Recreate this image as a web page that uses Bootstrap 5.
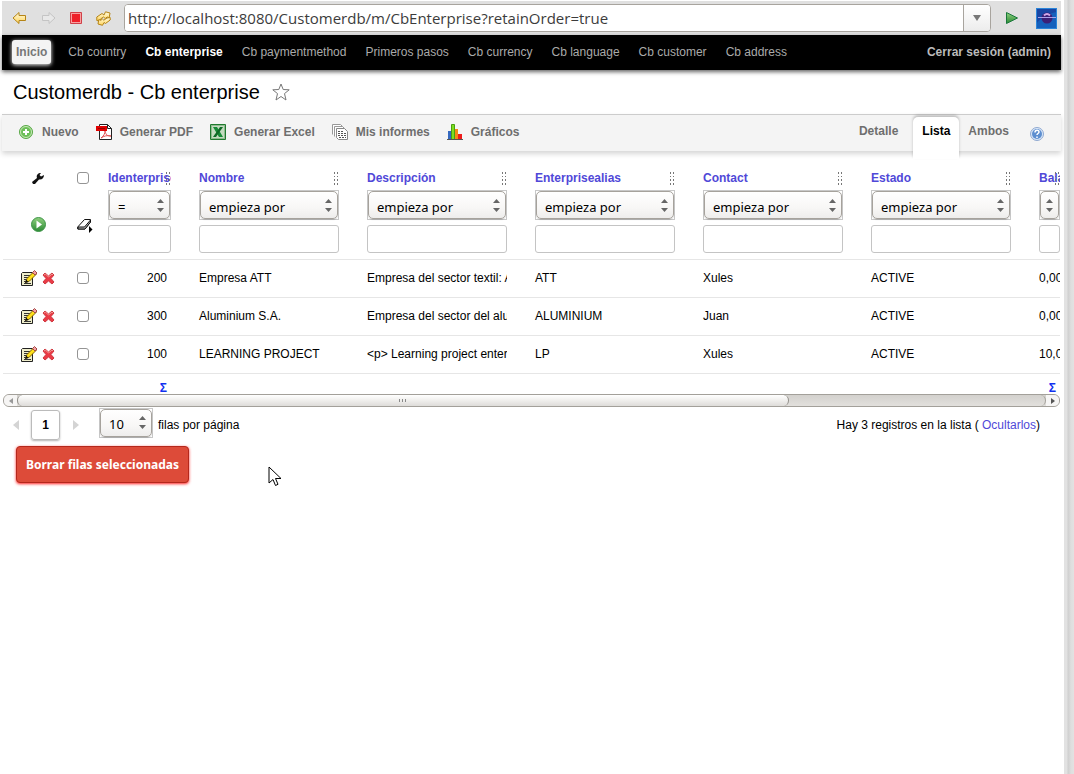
<!DOCTYPE html>
<html lang="es">
<head>
<meta charset="utf-8">
<meta name="viewport" content="width=device-width, initial-scale=1">
<title>Customerdb - Cb enterprise</title>
<link href="https://cdn.jsdelivr.net/npm/bootstrap@5.3.0/dist/css/bootstrap.min.css" rel="stylesheet">
<style>
  :root { --ui: "Noto Sans", "Open Sans", sans-serif; --link: #5048d8; }
  body { font: 12px/16px "Liberation Sans", Arial, sans-serif; color: #000; background: #fff; }
  a { color: var(--link); text-decoration: none; }
  svg { display: block; flex: none; }
  button { border: 0; background: none; padding: 0; color: inherit; }
  .frame { min-height: 100vh; padding-left: 2px; }
  .gutter { flex: 0 0 10px; background: linear-gradient(90deg, #e2e2e2 0 3px, #cfcfcf 4px, #dedede 7px, #e2e2e2); }
  .view { flex: 1 1 0; margin-right: 3px; min-width: 0; }

  .browser-bar { height: 34px; margin-top: 1px; background: #e0e0e0; padding: 0 4px 0 10px; }
  .history { gap: 14px; }
  .address { height: 28px; border: 1px solid #a8a49e; border-radius: 4px; background: #fff; margin: 0 15px 0 13px; overflow: hidden; }
  .address input { border: 0; outline: 0; padding: 0 0 0 3px; font: 15px/26px "Open Sans", sans-serif; color: #3c3c3c; min-width: 0; background: #fff; }
  .address button { width: 27px; border-left: 1px solid #a8a49e; background: linear-gradient(#fff, #ececec); }
  .emblem { margin-left: 18px; }

  .menu { height: 35px; background: #000; padding: 0 10px 2px; box-shadow: 0 2px 4px rgba(0,0,0,.6); gap: 19px; }
  .menu a { color: #aaa; }
  .menu a.current { color: #fff; font-weight: bold; }
  .menu a.home { background: #f4f4f4; color: #777; font-weight: bold; border-radius: 3px; padding: 4px; margin-right: -2px; box-shadow: 0 1px 4px #fff; }
  .menu a.logout { color: #bbb; font-weight: bold; }

  .page-title { font-size: 20px; line-height: 24px; height: 44px; padding: 0 11px; gap: 12px; }

  .actions { height: 37px; background: #f4f4f4; border-top: 1px solid #ccc; box-shadow: 0 3px 5px rgba(0,0,0,.16); padding: 0 17px 2px 16px; font-weight: bold; }
  .actions a { color: #6e6e6e; }
  .actions .tool { gap: 8px; margin-right: 17px; }
  .tabs a { padding: 8px 9px; height: 36px; }
  .tabs a.chosen { color: #000; background: #fff; border-radius: 5px 5px 0 0; height: 42px; margin: 2px 0 0 6px; box-shadow: 0 -2px 3px rgba(0,0,0,.22); padding-top: 6px; }

  .list { margin: 0 1px; overflow: hidden; }
  .list table { table-layout: fixed; width: 100%; border-collapse: collapse; }
  .list td, .list th { padding: 0 14px; border-bottom: 1px solid #e6e6e6; overflow: hidden; white-space: nowrap; }
  .list td:first-child, .list th:first-child { padding: 0 13px 0 17px; }
  .list td:nth-child(2), .list th:nth-child(2) { padding: 0 0 0 8px; }
  .list td:last-child, .list th:last-child { padding-right: 0; }
  .list thead th { height: 108px; padding-top: 19px !important; vertical-align: top; color: var(--link); }
  .list tbody td { height: 38px; vertical-align: middle; }
  .list tfoot td { height: 21px; border: 0; vertical-align: bottom; text-align: right; padding-bottom: 0; }
  .clip { overflow: hidden; }
  .heading { position: relative; margin-bottom: 4px; overflow: hidden; }
  .heading svg { position: absolute; right: 0; top: 2px; }
  .list input[type=text] { display: block; width: 100%; height: 28px; border: 1px solid #c4c4c4; border-radius: 3px; background: #fff; }
  .list input[type=checkbox] { appearance: none; display: block; width: 12px; height: 12px; border: 1px solid #949494; border-radius: 3px; background: #fff; margin: 0; }
  .list .head-tools { display: grid; row-gap: 33px; padding-top: 2px; }
  .picker { border: 1px solid #c8c8c8; height: 30px; margin-bottom: 5px; }
  .picker select { appearance: none; display: block; width: 100%; height: 28px; border: 1px solid #a6a29c; border-radius: 5px; padding: 3px 16px 0 8px; font: 13px/22px var(--ui); color: #000;
    background: url("data:image/svg+xml,%3Csvg xmlns='http://www.w3.org/2000/svg' width='7' height='13'%3E%3Cpath d='M0 4L3.500 0L7 4zM0 9L3.500 13L7 9z' fill='%23666'/%3E%3C/svg%3E") no-repeat right 5px center, linear-gradient(#fff, #f8f7f6 60%, #eeedec); box-shadow: 0 1px 1px rgba(0,0,0,.15); }
  .picker select.bare { padding: 0; }
  .sum { color: #1030f0; font: bold 12px/12px "Liberation Sans", sans-serif; }

  .slider-track { height: 13px; margin: 0 1px; border: 1px solid #a3a09a; border-radius: 6px; background: linear-gradient(#d3d1cd, #e2e0dd); overflow: hidden; }
  .slider-track button { width: 13px; background: #f6f5f4; display: flex; align-items: center; justify-content: center; }
  .thumb { width: 75%; border: 1px solid #918e88; border-width: 0 1px; border-radius: 6px; background: linear-gradient(#fff, #f1f0ee 45%, #dedcd9); }
  .track-end { width: 25%; border-right: 1px solid #a3a09a; border-radius: 0 6px 6px 0; }

  .pager { height: 34px; padding: 2px 21px 0 11px; }
  .page-now { width: 29px; height: 30px; border: 1px solid #bbb; border-radius: 3px; font-weight: bold; box-shadow: 0 1px 2px rgba(0,0,0,.3); margin: 0 13px 0 12px; }
  .pager .picker { width: 54px; margin: -5px 5px 0 20px; }
  .delete-rows { display: inline-block; margin: 5px 0 0 14px; height: 37px; padding: 0 9px; border: 1px solid #b5281c; border-radius: 4px; background: #dd4b39; color: #fff; font: bold 12px/32px var(--ui); box-shadow: 0 1px 3px #f22; }
  .pointer { position: absolute; left: 268px; top: 466px; }
</style>
</head>
<body>
<svg class="position-absolute" width="0" height="0" aria-hidden="true">
  <defs>
    <linearGradient id="gold" x2="0" y2="1"><stop stop-color="#fffbe0"/><stop offset="1" stop-color="#ffd45a"/></linearGradient>
    <linearGradient id="leaf" x2="0" y2="1"><stop stop-color="#8fd07e"/><stop offset="1" stop-color="#2b8a34"/></linearGradient>
    <symbol id="grip" viewBox="0 0 6 13"><path d="M1 0h1v2H1zM4 0h1v2H4zM1 4h1v1H1zM4 4h1v1H4zM1 7h1v2H1zM4 7h1v2H4zM1 11h1v2H1zM4 11h1v2H4z" fill="#777"/></symbol>
    <symbol id="edit" viewBox="0 0 18 17"><path d="M2.500 2.500h10v13h-11v-12z" fill="#efeecb" stroke="#222"/><path d="M4 5.500h6M4 7.500h5M4 9.500h3M4 11.500h4M4 13.500h7" stroke="#333"/><path d="M5.500 12.500l1.500-4L14 1.500l2.500 2.500-7 7z" fill="#ffe01b" stroke="#806000"/><path d="M12.500 2.500L14.500.5 17 3l-2 2z" fill="#f2a0a0" stroke="#a34848"/><path d="M5 13l1.200-3.500L8.500 12z" fill="#111"/></symbol>
    <symbol id="remove" viewBox="0 0 13 13"><path d="M1 3l2-2 3.500 3L10 1l2 2-3 3.500 3 3.500-2 2-3.500-3L3 12l-2-2 3-3.500z" fill="#ea3b46" stroke="#cf3a42"/><path d="M2 3l1.500-1 3 3L10 2l1 1" fill="none" stroke="#f09a94"/></symbol>
  </defs>
</svg>

<div class="frame d-flex">
  <div class="view">
    <div class="browser-bar d-flex align-items-center">
      <div class="history d-flex align-items-center">
        <button type="button" aria-label="Atrás"><svg width="15" height="14" viewBox="0 0 15 14"><path d="M1 7l6-5.500v3h6.500v5H7v3z" fill="url(#gold)" stroke="#b58416"/></svg></button>
        <button type="button" aria-label="Adelante"><svg width="15" height="14" viewBox="0 0 15 14"><path d="M14 7L8 1.500v3H1.500v5H8v3z" fill="#e8e8e8" stroke="#c4c4c4"/></svg></button>
        <button type="button" aria-label="Detener"><svg width="12" height="12" viewBox="0 0 12 12"><path d="M.5.5h11v11H.5z" fill="#f8a0a0" stroke="#d04048"/><path d="M2 2h8v8H2z" fill="#ee2028"/></svg></button>
        <button type="button" aria-label="Recargar"><svg width="15" height="15" viewBox="0 0 15 15"><path d="M.8 9.500V6L6 2.500 8 4 9.500.8 14 2l-.8 4.700-2-.7-2 1.500L7.500 6 4.500 8l-.7 2z" fill="url(#gold)" stroke="#b58416"/><path d="M14.200 6.500V9L9.500 12.500 8 11.500 6.500 14.300 2 13l.8-4.500 2 .8L6.500 8l1.300 1.200L11 7z" fill="url(#gold)" stroke="#b58416"/></svg></button>
      </div>
      <div class="address d-flex flex-grow-1">
        <input type="text" class="flex-grow-1" aria-label="Dirección" value="http://localhost:8080/Customerdb/m/CbEnterprise?retainOrder=true">
        <button type="button" class="d-flex align-items-center justify-content-center" aria-label="Historial"><svg width="8" height="6" viewBox="0 0 8 6"><path d="M0 0h8L4 6z" fill="#777"/></svg></button>
      </div>
      <button type="button" aria-label="Ir"><svg width="12" height="12" viewBox="0 0 12 12"><path d="M.5.5L11.500 6 .5 11.500z" fill="url(#leaf)" stroke="#18773a"/></svg></button>
      <svg class="emblem" width="21" height="21" viewBox="0 0 21 21" role="img" aria-label="Navegador"><rect width="21" height="21" fill="#1846a4"/><path d="M0 16C6 8 14 5 21 4v17H0z" fill="#1560bc"/><rect x=".5" y=".5" width="20" height="20" fill="none" stroke="#2b85d8"/><circle cx="11" cy="10" r="5.500" fill="#3b1f76"/><path d="M8 7.500q3-3 6 0" stroke="#d0a8e8" fill="none" stroke-width="2"/><path d="M2 9.500h18" stroke="#a8a0e8"/></svg>
    </div>

    <nav class="menu d-flex align-items-center" aria-label="Módulos">
      <a class="home" href="#">Inicio</a>
      <a href="#">Cb country</a>
      <a class="current" href="#">Cb enterprise</a>
      <a href="#">Cb paymentmethod</a>
      <a href="#">Primeros pasos</a>
      <a href="#">Cb currency</a>
      <a href="#">Cb language</a>
      <a href="#">Cb customer</a>
      <a href="#">Cb address</a>
      <a class="logout ms-auto" href="#">Cerrar sesión (admin)</a>
    </nav>

    <h1 class="page-title d-flex align-items-center m-0 fw-normal">Customerdb - Cb enterprise
      <svg width="18" height="18" viewBox="0 0 18 18" role="img" aria-label="Favorito"><path d="M9 1l2.200 5.500 6 .3-4.700 3.800L14 17l-5-3.500L4 17l1.500-6.400L.8 6.800l6-.3z" fill="#fff" stroke="#777"/></svg>
    </h1>

    <div class="actions d-flex align-items-center">
      <a href="#" class="tool d-flex align-items-center"><svg width="16" height="16" viewBox="0 0 16 16"><circle cx="8" cy="8" r="6.500" fill="#6cbf58" stroke="#5aa848"/><circle cx="8" cy="8" r="5.500" fill="none" stroke="#c8e8b8"/><path d="M8 5v6M5 8h6" stroke="#fff" stroke-width="2"/></svg>Nuevo</a>
      <a href="#" class="tool d-flex align-items-center"><svg width="16" height="16" viewBox="0 0 16 16"><path d="M3.500.5h8l4 4v11h-12z" fill="#fff" stroke="#222"/><path d="M11.500.5v4h4" fill="none" stroke="#222"/><path d="M0 2h11v5H0z" fill="#e00000"/><path d="M2 4.500h7" stroke="#900"/><path d="M5 14c3-2 4-5 4-7 1 4 2 5 6 5-4-1-7 0-10 2z" fill="none" stroke="#e05050"/></svg>Generar PDF</a>
      <a href="#" class="tool d-flex align-items-center"><svg width="16" height="16" viewBox="0 0 16 16"><path d="M.5.5h15v15H.5z" fill="#c4dcc0" stroke="#1f7a2e"/><path d="M1.500 1.500h13v13h-13z" fill="none" stroke="#5a9a60" stroke-dasharray="1 1"/><path d="M3 3h4l6 10H9z" fill="#178a36"/><path d="M13 3h-3L3 13h3z" fill="#0f6a26"/></svg>Generar Excel</a>
      <a href="#" class="tool d-flex align-items-center"><svg width="16" height="16" viewBox="0 0 16 16"><path d="M.5 10.500V.5h8l2 2M2.500 12.500v-10h8l2 2" fill="#fff" stroke="#999"/><path d="M4.500 4.500h8l3 3v8h-9l-2-2z" fill="#fff" stroke="#888"/><path d="M6 7.500h6M6 9.500h8M6 11.500h8M7 13.500h7" stroke="#555" stroke-dasharray="2 1"/></svg>Mis informes</a>
      <a href="#" class="tool d-flex align-items-center"><svg width="16" height="16" viewBox="0 0 16 16"><path d="M1 7h4v8H1z" fill="#3569c0"/><path d="M8 5h3v10H8z" fill="#f48a18"/><path d="M4.500.5h3v15h-3z" fill="#7dde20" stroke="#48a010"/><path d="M11 10h4v5h-4z" fill="#ee1c1c"/><path d="M0 15.500h16" stroke="#555"/></svg>Gráficos</a>
      <div class="tabs d-flex ms-auto align-self-start">
        <a href="#">Detalle</a>
        <a href="#" class="chosen">Lista</a>
        <a href="#">Ambos</a>
      </div>
      <a href="#" aria-label="Ayuda" class="ms-2 ps-1 pt-1"><svg width="14" height="14" viewBox="0 0 14 14"><circle cx="7" cy="7" r="6.500" fill="#dbe8f8" stroke="#8fa8d0"/><circle cx="7" cy="7" r="5" fill="#5e8fd0"/><path d="M5 5.500c0-3 4-3 4-.5 0 1.500-2 1.500-2 3M7 9.500v1.500" fill="none" stroke="#fff" stroke-width="1.500"/></svg></a>
    </div>

    <main>
      <div class="list">
        <table>
          <colgroup><col style="width:66px"><col style="width:25px"><col style="width:91px"><col style="width:168px"><col style="width:168px"><col style="width:168px"><col style="width:168px"><col style="width:168px"><col></colgroup>
          <thead>
            <tr>
              <th>
                <div class="head-tools justify-content-center">
                  <svg class="mx-auto" width="12" height="12" viewBox="0 0 12 12"><path d="M0 10l5-4c-1-3 1-5 4-5L7.500 3l1.500 1.500L12 3c0 3-2 5-5 4.500L3 12H1z" fill="#111"/></svg>
                  <button type="button" aria-label="Filtrar"><svg width="15" height="15" viewBox="0 0 15 15"><circle cx="7.500" cy="7.500" r="7" fill="url(#leaf)" stroke="#3f9548"/><path d="M5.500 3.500v8L11 7.500z" fill="#fff"/></svg></button>
                </div>
              </th>
              <th>
                <div class="head-tools">
                  <input type="checkbox" aria-label="Seleccionar todo">
                  <button type="button" aria-label="Limpiar filtro"><svg width="16" height="16" viewBox="0 0 16 16"><path d="M.7 10L7.500 2.500h6V5L8 12H.7z" fill="#fff" stroke="#111"/><path d="M1 10h6.500l6-7v2L8 12H1z" fill="#bbb" stroke="#111"/><path d="M12 9l3.500 3.500L12 16z" fill="#000"/></svg></button>
                </div>
              </th>
              <th><div class="heading">Identerprise<svg width="6" height="13"><use href="#grip"/></svg></div><div class="picker"><select aria-label="Comparador de identerprise"><option>=</option></select></div><input type="text" aria-label="Valor de identerprise"></th>
              <th><div class="heading">Nombre<svg width="6" height="13"><use href="#grip"/></svg></div><div class="picker"><select aria-label="Comparador de nombre"><option>empieza por</option></select></div><input type="text" aria-label="Valor de nombre"></th>
              <th><div class="heading">Descripción<svg width="6" height="13"><use href="#grip"/></svg></div><div class="picker"><select aria-label="Comparador de descripción"><option>empieza por</option></select></div><input type="text" aria-label="Valor de descripción"></th>
              <th><div class="heading">Enterprisealias<svg width="6" height="13"><use href="#grip"/></svg></div><div class="picker"><select aria-label="Comparador de alias"><option>empieza por</option></select></div><input type="text" aria-label="Valor de alias"></th>
              <th><div class="heading">Contact<svg width="6" height="13"><use href="#grip"/></svg></div><div class="picker"><select aria-label="Comparador de contacto"><option>empieza por</option></select></div><input type="text" aria-label="Valor de contacto"></th>
              <th><div class="heading">Estado<svg width="6" height="13"><use href="#grip"/></svg></div><div class="picker"><select aria-label="Comparador de estado"><option>empieza por</option></select></div><input type="text" aria-label="Valor de estado"></th>
              <th><div class="heading">Balance<svg width="6" height="13"><use href="#grip"/></svg></div><div class="picker"><select class="bare" aria-label="Comparador de balance"><option></option></select></div><input type="text" aria-label="Valor de balance"></th>
            </tr>
          </thead>
          <tbody>
            <tr>
              <td><div class="d-flex align-items-center gap-1"><a href="#" aria-label="Editar"><svg width="18" height="17"><use href="#edit"/></svg></a><a href="#" aria-label="Borrar"><svg width="13" height="13"><use href="#remove"/></svg></a></div></td>
              <td><input type="checkbox" aria-label="Seleccionar 200"></td>
              <td class="text-end"><div class="pe-1">200</div></td><td>Empresa ATT</td><td><div class="clip">Empresa del sector textil: ATT</div></td><td>ATT</td><td>Xules</td><td>ACTIVE</td><td>0,00</td>
            </tr>
            <tr>
              <td><div class="d-flex align-items-center gap-1"><a href="#" aria-label="Editar"><svg width="18" height="17"><use href="#edit"/></svg></a><a href="#" aria-label="Borrar"><svg width="13" height="13"><use href="#remove"/></svg></a></div></td>
              <td><input type="checkbox" aria-label="Seleccionar 300"></td>
              <td class="text-end"><div class="pe-1">300</div></td><td>Aluminium S.A.</td><td><div class="clip">Empresa del sector del aluminio</div></td><td>ALUMINIUM</td><td>Juan</td><td>ACTIVE</td><td>0,00</td>
            </tr>
            <tr>
              <td><div class="d-flex align-items-center gap-1"><a href="#" aria-label="Editar"><svg width="18" height="17"><use href="#edit"/></svg></a><a href="#" aria-label="Borrar"><svg width="13" height="13"><use href="#remove"/></svg></a></div></td>
              <td><input type="checkbox" aria-label="Seleccionar 100"></td>
              <td class="text-end"><div class="pe-1">100</div></td><td>LEARNING PROJECT</td><td><div class="clip">&lt;p&gt; Learning project enterprise</div></td><td>LP</td><td>Xules</td><td>ACTIVE</td><td>10,00</td>
            </tr>
          </tbody>
          <tfoot>
            <tr><td></td><td></td><td><div class="sum pe-1">Σ</div></td><td></td><td></td><td></td><td></td><td></td><td><div class="sum pe-1">Σ</div></td></tr>
          </tfoot>
        </table>
      </div>

      <div class="slider-track d-flex">
        <button type="button" class="flex-shrink-0" aria-label="Desplazar a la izquierda"><svg width="4" height="6" viewBox="0 0 4 6"><path d="M4 0v6L0 3z" fill="#999"/></svg></button>
        <div class="thumb d-flex align-items-center justify-content-center"><svg width="8" height="3" viewBox="0 0 8 3"><path d="M0 0h1v3H0zM3 0h1v3H3zM6 0h1v3H6z" fill="#888"/></svg></div>
        <div class="track-end"></div>
        <button type="button" class="flex-shrink-0" aria-label="Desplazar a la derecha"><svg width="4" height="6" viewBox="0 0 4 6"><path d="M0 0v6l4-3z" fill="#555"/></svg></button>
      </div>

      <div class="pager d-flex align-items-center">
        <button type="button" aria-label="Página anterior"><svg width="6" height="10" viewBox="0 0 6 10"><path d="M6 0v10L0 5z" fill="#d4d4d4"/></svg></button>
        <span class="page-now d-flex align-items-center justify-content-center">1</span>
        <button type="button" aria-label="Página siguiente"><svg width="6" height="10" viewBox="0 0 6 10"><path d="M0 0v10l6-5z" fill="#d4d4d4"/></svg></button>
        <div class="picker"><select id="rows"><option>10</option></select></div>
        <label for="rows">filas por página</label>
        <span class="ms-auto">Hay 3 registros en la lista ( <a href="#">Ocultarlos</a>)</span>
      </div>
      <button type="button" class="delete-rows">Borrar filas seleccionadas</button>
    </main>
  </div>
  <div class="gutter"></div>
</div>
<svg class="pointer" width="14" height="21" viewBox="0 0 14 21"><path d="M1 1v16l4-3.500 2.500 6 2.500-1.200L7.500 12.500H13z" fill="#fff" stroke="#000"/></svg>
<script src="https://cdn.jsdelivr.net/npm/bootstrap@5.3.0/dist/js/bootstrap.bundle.min.js"></script>
</body>
</html>
